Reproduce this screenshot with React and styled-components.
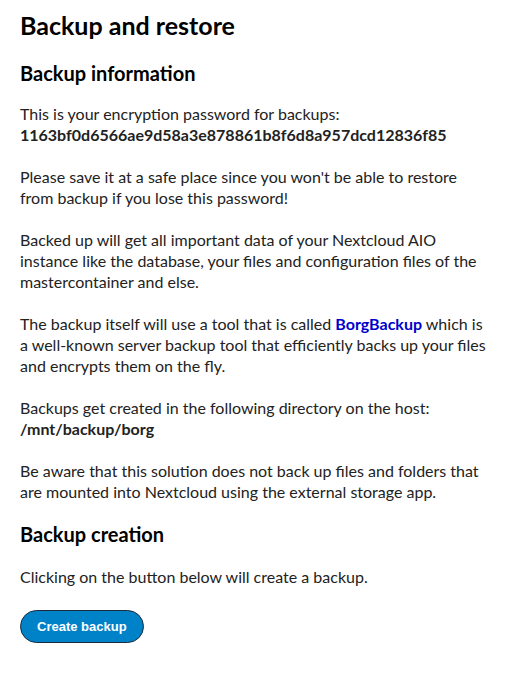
import styled, { createGlobalStyle } from 'styled-components';

const GlobalStyle = createGlobalStyle`
  body {
    margin: 0;
    background: #ffffff;
    font-family: Lato, "Noto Sans", sans-serif;
    color: #222222;
  }
`;

const App = () => {
  return (
    <Wrap>
      <GlobalStyle />
      <Title>Backup and restore</Title>
      <SubTitle>Backup information</SubTitle>
      <Text>
        This is your encryption password for backups:
        <br />
        <b>1163bf0d6566ae9d58a3e878861b8f6d8a957dcd12836f85</b>
        <br />
        <br />
        Please save it at a safe place since you won't be able to restore from backup if you lose this password!
        <br />
        <br />
        Backed up will get all important data of your Nextcloud AIO instance like the database, your files and
        configuration files of the mastercontainer and else.
        <br />
        <br />
        The backup itself will use a tool that is called <Link href="#">BorgBackup</Link> which is a well-known
        server backup tool that efficiently backs up your files and encrypts them on the fly.
        <br />
        <br />
        Backups get created in the following directory on the host:
        <br />
        <b>/mnt/backup/borg</b>
        <br />
        <br />
        Be aware that this solution does not back up files and folders that are mounted into Nextcloud using the
        external storage app.
      </Text>
      <SubTitle $top={20} $bottom={20}>Backup creation</SubTitle>
      <Text>Clicking on the button below will create a backup.</Text>
      <CreateButton type="button">Create backup</CreateButton>
    </Wrap>
  );
};

const Wrap = styled.div`
  display: flex;
  flex-direction: column;
  align-items: flex-start;
  padding: 10px 20px 20px;
`;

const Title = styled.h1`
  font-size: 25px;
  line-height: 30px;
  font-weight: bold;
  color: #000000;
  margin: 0 0 21px;
`;

const SubTitle = styled.h2`
  font-size: 20px;
  line-height: 24px;
  font-weight: bold;
  color: #000000;
  margin: ${({ $top }) => $top || 0}px 0 ${({ $bottom }) => $bottom || 18}px;
`;

const Text = styled.p`
  font-size: 16px;
  line-height: 21px;
  margin: 0;
`;

const Link = styled.a`
  color: #0000cc;
  font-weight: bold;
  text-decoration: none;
`;

const CreateButton = styled.button`
  height: 33px;
  padding: 0 16px;
  margin-top: 23px;
  border: 1px solid #1a2b3c;
  border-radius: 17px;
  background: #0082c9;
  color: #ffffff;
  font-family: "Liberation Sans", Arial, sans-serif;
  font-size: 13px;
  font-weight: bold;
  cursor: pointer;
`;

export default App;
